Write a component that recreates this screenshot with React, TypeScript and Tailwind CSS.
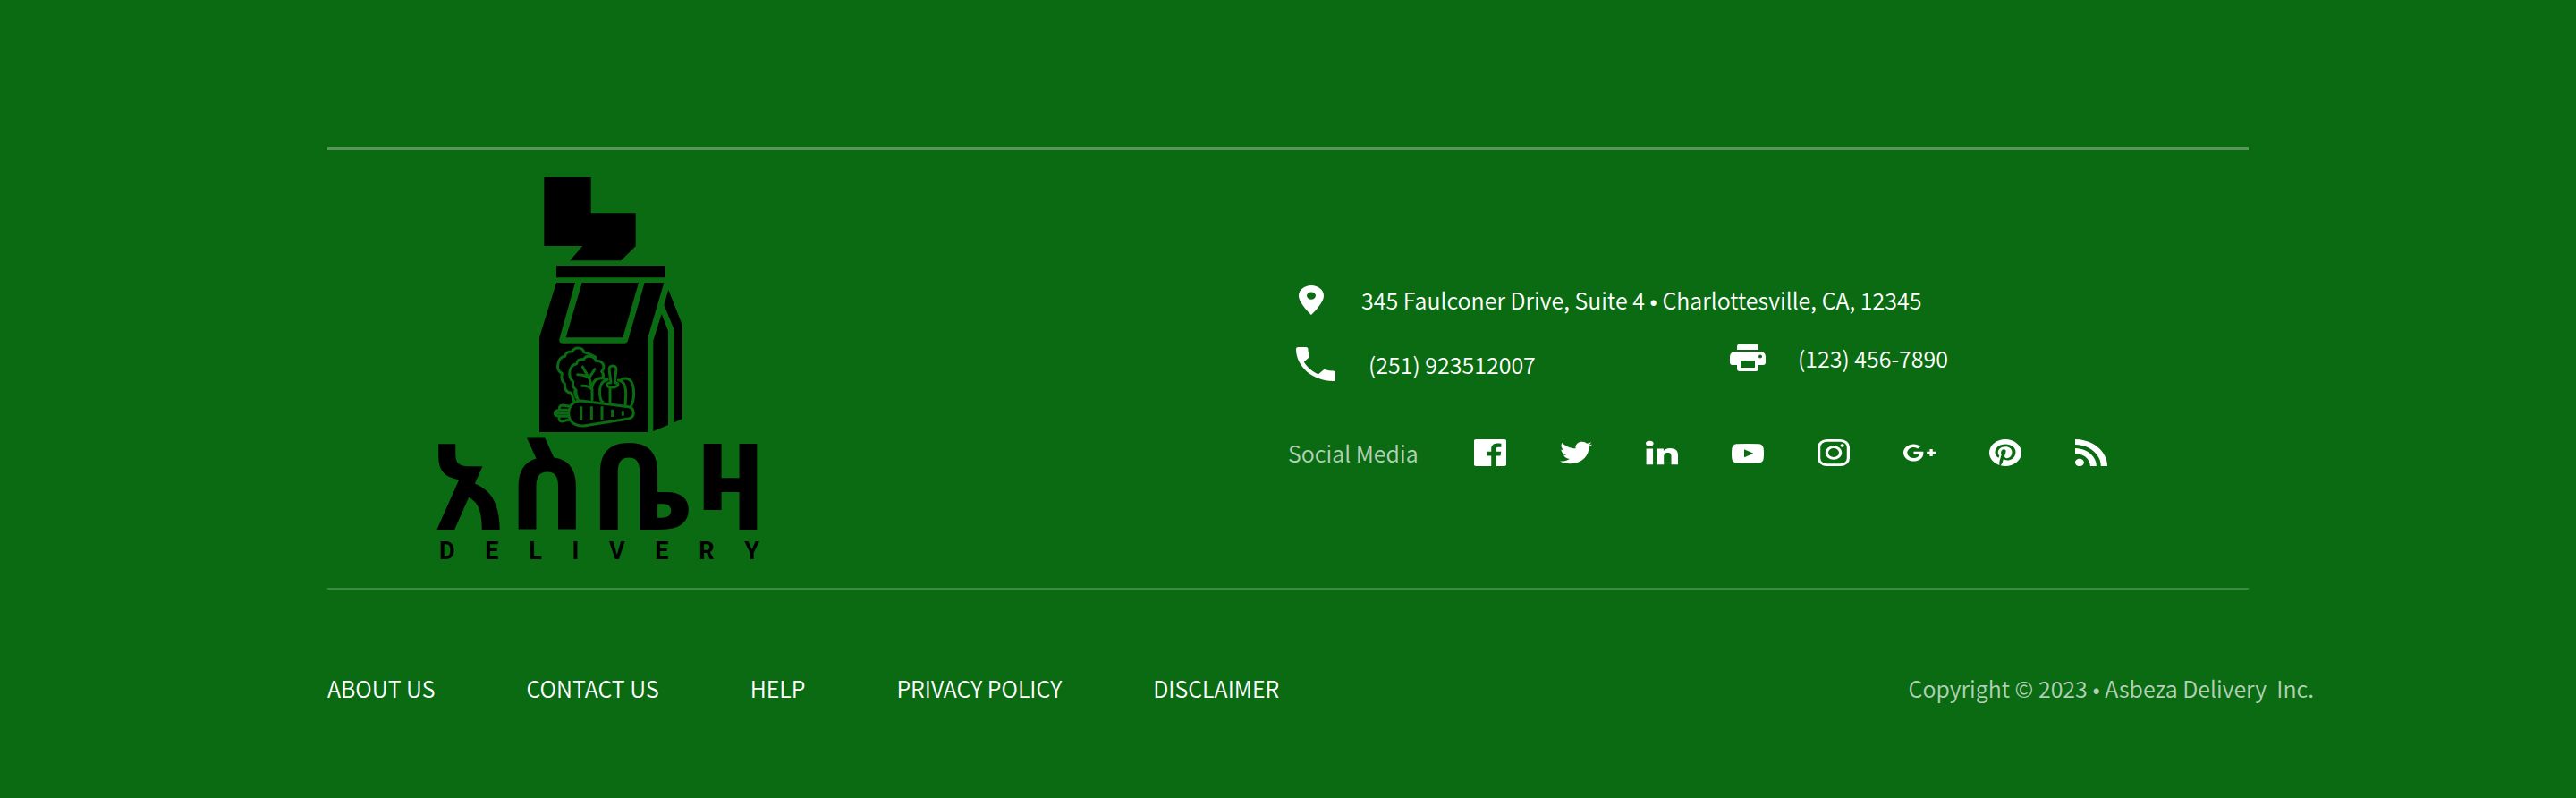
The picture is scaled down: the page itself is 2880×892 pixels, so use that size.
import type { ReactNode } from "react";
import { FaPinterest } from "react-icons/fa";

function SocialIcon({ label, viewBox = "0 0 24 24", children }: { label: string; viewBox?: string; children: ReactNode }) {
  return (
    <a href="#" aria-label={label} className="block">
      <svg viewBox={viewBox} preserveAspectRatio="none" fill="currentColor" className="h-[30px] w-9">
        {children}
      </svg>
    </a>
  );
}

function BagMark() {
  return (
    <svg viewBox="0 0 1200 912" className="h-[304px] w-[400px]" role="img" aria-label="Grocery bag">
      <path d="M415 54H572V175H722V286L673 334H502L544 285H415Z" />
      <path d="M456 351H822V391H456Z" />
      <path d="M456 408H519L466 598Q464 611 476 611H685Q693 611 696 602L752 408H817L763 592V909H399V592Z" />
      <path d="M542 408H732L679 592H488Z" />
      <path d="M809 513L831 570V885L781 906V602Z" />
      <path d="M832 432L879 551V864L852 876V568L817 482Z" />
      <g fill="none" stroke="#0b6b13" strokeWidth="9" strokeLinejoin="round" strokeLinecap="round">
        <path d="M516 806L506 778Q482 776 484 746Q470 736 475 712Q458 704 461 684Q464 658 485 655Q487 638 510 639Q516 625 530 627Q546 628 548 641Q562 643 588 658" />
        <path d="M529 800Q513 784 520 766Q508 756 512 740Q497 727 501 705Q505 683 524 680Q526 663 548 665Q553 654 568 655Q586 657 588 670Q611 669 615 688Q616 697 608 706Q615 712 613 725" />
        <path d="M544 690L568 733L576 766V800M585 698L566 727M527 716Q550 716 566 727M542 754Q563 752 574 765M522 768Q521 782 526 794" />
        <path d="M577 755Q582 726 612 728M612 808Q600 803 602 765Q605 738 626 734M636 812V759M664 735Q690 738 689 785L687 822M675 731Q714 718 716 780Q715 808 705 825M612 728L628 733" />
        <path d="M639 743L634 706Q630 687 645 687Q660 687 656 706L652 743Q663 743 663 750Q658 759 644 759Q626 759 626 750Q627 743 639 743" />
        <path d="M540 804L698 824Q715 827 715 845Q714 861 698 864L548 888Q500 889 497 846Q500 804 540 804Z" />
        <path d="M502 823L476 819Q463 821 467 835L492 835M495 846H458M492 835H466Q450 838 451 846Q451 855 466 856H494M466 857Q462 873 474 873L501 867" />
        <path strokeLinecap="butt" d="M539 823V867M574 823V867M609 823V867M644 833V858M679 838V854" />
      </g>
    </svg>
  );
}

function SpacedWord({ text }: { text: string }) {
  return (
    <>
      {text.split("").map((letter, i) => (
        <span key={i}>{letter}</span>
      ))}
    </>
  );
}

function Logo() {
  return (
    <a href="#" className="flex w-[400px] flex-col items-center text-black">
      <BagMark />
      <span className="flex w-[374px] justify-between font-['Noto_Sans_Ethiopic','FreeSans','DejaVu_Sans',sans-serif] text-[134px] leading-[112px] font-bold">
        <SpacedWord text="አስቤዛ" />
      </span>
      <span className="mt-1 flex w-[358px] justify-between font-['Roboto'] text-[27px] leading-8 font-bold">
        <SpacedWord text="DELIVERY" />
      </span>
    </a>
  );
}

const links = ["ABOUT US", "CONTACT US", "HELP", "PRIVACY POLICY", "DISCLAIMER"];

export default function App() {
  return (
    <footer className="min-h-screen bg-[#0b6b13] pt-[164px] font-['Noto_Sans_CJK_JP','Noto_Sans_CJK_SC',sans-serif] text-[25px] leading-10 font-[350] text-white">
      <div className="mx-[366px] flex border-t-4 border-b-2 border-t-white/30 border-b-white/20">
        <div className="w-1/2 pt-3 pb-[25px] pl-[104px]">
          <Logo />
        </div>
        <div className="w-1/2 pt-[147px]">
          <address className="not-italic">
            <div className="flex items-center gap-[42px] pl-3">
              <svg viewBox="5 2 14 20" preserveAspectRatio="none" fill="currentColor" className="h-[33px] w-7">
                <path d="M12 2C8.13 2 5 5.13 5 9c0 5.25 7 13 7 13s7-7.75 7-13c0-3.87-3.13-7-7-7zm0 9.500a2.500 2.500 0 0 1 0-5 2.500 2.500 0 0 1 0 5z" />
              </svg>
              <span>345 Faulconer Drive, Suite 4 • Charlottesville, CA, 12345</span>
            </div>
            <div className="mt-[25px] flex">
              <a href="tel:251923512007" className="flex w-[486px] items-center gap-[37px] pt-[7px] pl-[9px]">
                <svg viewBox="3 3 18 18" preserveAspectRatio="none" fill="currentColor" className="h-[38px] w-11">
                  <path d="M6.620 10.790c1.440 2.830 3.760 5.140 6.590 6.590l2.200-2.200c.27-.27.67-.36 1.020-.24 1.120.37 2.330.57 3.570.57.55 0 1 .45 1 1V20c0 .55-.45 1-1 1C10.610 21 3 13.390 3 4c0-.55.45-1 1-1h3.500c.55 0 1 .45 1 1 0 1.250.2 2.450.57 3.570.11.35.03.74-.25 1.020l-2.200 2.200z" />
                </svg>
                (251) 923512007
              </a>
              <a href="tel:1234567890" className="flex items-center gap-9 self-start pl-2">
                <svg viewBox="0 0 40 30" fill="currentColor" className="h-[30px] w-10">
                  <path fillRule="evenodd" d="M10 0H30Q32 0 32 2V6H8V2Q8 0 10 0ZM5 8H35Q40 9 40 14V20Q40 23 37 23H32V27Q32 30 29 30H11Q8 30 8 27V23H3Q0 23 0 20V14Q0 9 5 8ZM12 18V26H28V18ZM34 11.500A2 2 0 1 0 34 15.500A2 2 0 1 0 34 11.500Z" />
                </svg>
                (123) 456-7890
              </a>
            </div>
          </address>
          <div className="mt-[59px] flex items-center gap-[60px]">
            <span className="w-[148px] text-white/70">Social Media</span>
            <SocialIcon label="Facebook">
              <path d="M22.676 0H1.324C.593 0 0 .593 0 1.324v21.352C0 23.408.593 24 1.324 24h11.494v-9.294H9.689v-3.621h3.129V8.410c0-3.099 1.894-4.785 4.659-4.785 1.325 0 2.464.097 2.796.141v3.240h-1.921c-1.500 0-1.792.721-1.792 1.771v2.311h3.584l-.465 3.630H16.560V24h6.115c.733 0 1.325-.592 1.325-1.324V1.324C24 .593 23.408 0 22.676 0" />
            </SocialIcon>
            <SocialIcon label="Twitter">
              <path d="M23.954 4.569c-.885.389-1.830.654-2.825.775 1.014-.611 1.794-1.574 2.163-2.723-.951.555-2.005.959-3.127 1.184-.896-.959-2.173-1.559-3.591-1.559-2.717 0-4.920 2.203-4.920 4.917 0 .39.045.765.127 1.124C7.691 8.094 4.066 6.130 1.640 3.161c-.427.722-.666 1.561-.666 2.475 0 1.710.87 3.213 2.188 4.096-.807-.026-1.566-.248-2.228-.616v.061c0 2.385 1.693 4.374 3.946 4.827-.413.111-.849.171-1.296.171-.314 0-.615-.03-.916-.086.631 1.953 2.445 3.377 4.604 3.417-1.680 1.319-3.809 2.105-6.102 2.105-.39 0-.779-.023-1.170-.067 2.189 1.394 4.768 2.209 7.557 2.209 9.054 0 13.999-7.496 13.999-13.986 0-.209 0-.42-.015-.63.961-.689 1.800-1.560 2.460-2.548z" />
            </SocialIcon>
            <SocialIcon label="LinkedIn" viewBox="0 -28 448 505">
              <path d="M100.280 448H7.400V148.900h92.880zM53.790 108.100C24.090 108.100 0 83.500 0 53.800a53.790 53.790 0 0 1 107.580 0c0 29.700-24.100 54.300-53.790 54.300zM447.900 448h-92.680V302.400c0-34.700-.7-79.200-48.290-79.200-48.290 0-55.690 37.700-55.690 76.700V448h-92.780V148.900h89.080v40.800h1.300c12.400-23.500 42.690-48.300 87.880-48.300 94 0 111.280 61.900 111.280 142.300V448z" />
            </SocialIcon>
            <SocialIcon label="YouTube" viewBox="0 0 108 90">
              <path fillRule="evenodd" d="M16 16Q54 14 92 16Q105 17 107 31Q109 48 107 65Q105 78 92 79Q54 82 16 79Q3 78 1 65Q-1 48 1 31Q3 17 16 16ZM42 34V61L73 47.500Z" />
            </SocialIcon>
            <SocialIcon label="Instagram">
              <rect x="1.080" y="1.080" width="21.840" height="21.840" rx="6" fill="none" stroke="currentColor" strokeWidth="2.160" />
              <circle cx="12" cy="12" r="5.080" fill="none" stroke="currentColor" strokeWidth="2.160" />
              <circle cx="18.400" cy="5.600" r="1.440" />
            </SocialIcon>
            <SocialIcon label="Google Plus">
              <path d="M7.635 10.909v2.619h4.335c-.173 1.125-1.310 3.295-4.331 3.295-2.604 0-4.731-2.160-4.731-4.823 0-2.662 2.122-4.822 4.728-4.822 1.485 0 2.479.633 3.045 1.178l2.073-1.994c-1.330-1.245-3.056-1.995-5.115-1.995C3.412 4.365 0 7.785 0 12s3.414 7.635 7.635 7.635c4.410 0 7.332-3.098 7.332-7.461 0-.501-.054-.885-.12-1.265H7.635zm16.365 0h-2.183V8.726h-2.183v2.183h-2.182v2.184h2.184v2.189h2.189v-2.189H24" />
            </SocialIcon>
            <a href="#" aria-label="Pinterest" className="block">
              <FaPinterest viewBox="0 8 496 496" preserveAspectRatio="none" className="h-[30px] w-9" />
            </a>
            <SocialIcon label="RSS">
              <path d="M19.199 24C19.199 13.467 10.533 4.800 0 4.800V0c13.165 0 24 10.835 24 24h-4.801zM3.291 17.415c1.814 0 3.293 1.479 3.293 3.295 0 1.813-1.485 3.290-3.301 3.290C1.470 24 0 22.526 0 20.710s1.475-3.294 3.291-3.295zM15.909 24h-4.665c0-6.169-5.075-11.245-11.244-11.245V8.090c8.727 0 15.909 7.184 15.909 15.910z" />
            </SocialIcon>
          </div>
        </div>
      </div>
      <div className="flex justify-between pt-[90px] pr-[293px] pl-[366px]">
        <nav className="flex gap-[102px]">
          {links.map((link) => (
            <a key={link} href="#">
              {link}
            </a>
          ))}
        </nav>
        <p className="whitespace-pre text-white/70">Copyright © 2023 • Asbeza Delivery  Inc.</p>
      </div>
    </footer>
  );
}
